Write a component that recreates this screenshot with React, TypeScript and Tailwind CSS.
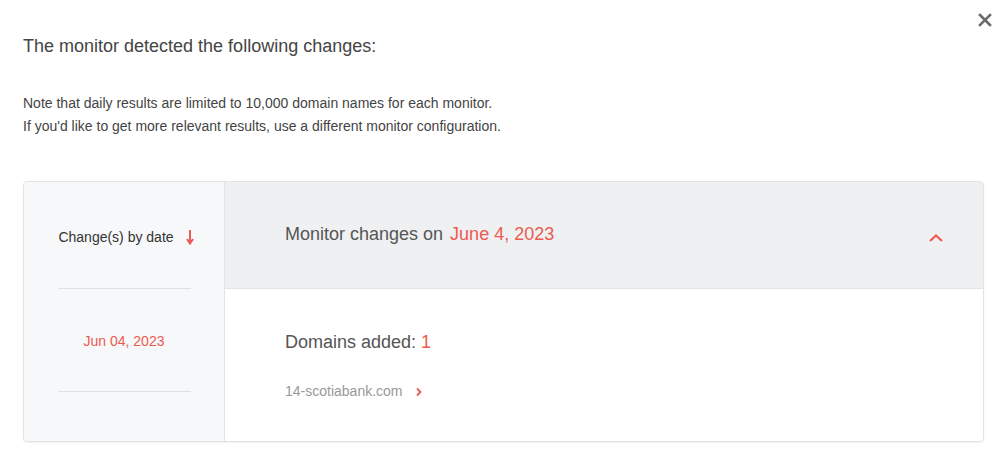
import React from "react";

function CloseIcon() {
  return (
    <svg width="14" height="14" viewBox="0 0 14 14" className="block">
      <path d="M2 2 L12 12 M12 2 L2 12" stroke="#6b6b6b" strokeWidth="2.6" strokeLinecap="square" />
    </svg>
  );
}

function ArrowDown() {
  return (
    <svg width="8" height="16" viewBox="0 0 8 16" className="block">
      <path d="M4 1 V14" stroke="#ec5a50" strokeWidth="2" />
      <path d="M1 10 L4 14.5 L7 10" stroke="#ec5a50" strokeWidth="2" fill="none" />
    </svg>
  );
}

function ChevronUp() {
  return (
    <svg width="16" height="10" viewBox="0 0 16 10" className="block">
      <path d="M2 8 L8 2.5 L14 8" stroke="#ec5a50" strokeWidth="2.2" fill="none" />
    </svg>
  );
}

function ChevronRight() {
  return (
    <svg width="8" height="10" viewBox="0 0 8 10" className="block">
      <path d="M2 1.5 L5.5 5 L2 8.5" stroke="#ec5a50" strokeWidth="1.8" fill="none" />
    </svg>
  );
}

export default function App() {
  return (
    <div className="relative h-[457px] w-[1004px] overflow-hidden bg-white font-['Liberation_Sans',Arial,sans-serif]">
      <button className="absolute right-[12px] top-[13px]" aria-label="Close">
        <CloseIcon />
      </button>

      <div className="px-[23px] pt-[34px]">
        <h1 className="text-[18px] leading-[25px] text-[#444]">
          The monitor detected the following changes:
        </h1>
        <div className="mt-[33px] text-[14px] leading-[23px] text-[#444]">
          <p>Note that daily results are limited to 10,000 domain names for each monitor.</p>
          <p>If you'd like to get more relevant results, use a different monitor configuration.</p>
        </div>

        <div className="mt-[43px] flex h-[261px] w-[961px] overflow-hidden rounded-[4px] border border-[#e2e3e6] shadow-[0_1px_2px_rgba(0,0,0,0.06)]">
          <div className="flex w-[201px] shrink-0 flex-col items-center border-r border-[#e2e3e6] bg-[#f7f8fa]">
            <div className="flex h-[106px] w-full items-center justify-center gap-[12px] whitespace-nowrap pl-[4px] pt-[4px]">
              <span className="text-[14px] text-[#333]">Change(s) by date</span>
              <ArrowDown />
            </div>
            <div className="h-px w-[133px] bg-[#dfe0e3]" />
            <div className="flex h-[102px] w-full items-center justify-center whitespace-nowrap pt-[2px]">
              <span className="text-[14px] text-[#ec5a50]">Jun 04, 2023</span>
            </div>
            <div className="h-px w-[133px] bg-[#dfe0e3]" />
          </div>

          <div className="flex flex-1 flex-col">
            <div className="flex h-[107px] items-center justify-between border-b border-[#e2e3e6] bg-[#eff0f2] pb-[2px] pl-[60px] pr-[39px]">
              <div className="text-[18px] text-[#555]">
                Monitor changes on <span className="ml-[2px] text-[#ec5a50]">June 4, 2023</span>
              </div>
              <div className="pt-[8px]">
                <ChevronUp />
              </div>
            </div>
            <div className="pl-[60px] pt-[42px]">
              <div className="text-[18px] leading-[22px] text-[#555]">
                Domains added: <span className="text-[#ec5a50]">1</span>
              </div>
              <div className="mt-[28px] flex items-center gap-[12px]">
                <span className="text-[14px] text-[#999]">14-scotiabank.com</span>
                <ChevronRight />
              </div>
            </div>
          </div>
        </div>
      </div>
    </div>
  );
}
